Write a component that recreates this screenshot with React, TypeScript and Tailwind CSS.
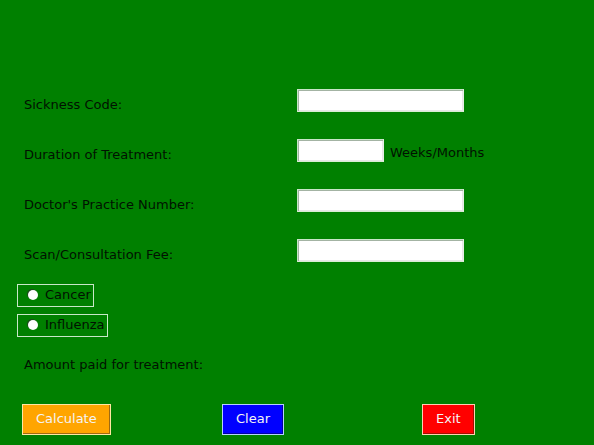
import { useState } from "react";

const inputClass =
  "h-[23px] border border-t-[#c8e6c8] border-l-[#c8e6c8] border-r-[#e4efe4] border-b-[#d9ecd4] bg-white px-1 text-black outline-none shadow-[inset_1px_1px_0_#a3b3a3,inset_-1px_-1px_0_#e6e6e6]";

const buttonClass =
  "h-[31px] justify-self-start border px-[13px] pb-[2px] leading-4 text-[#f4f4f4]";

type FieldProps = {
  id: string;
  label: string;
  value: string;
  onChange: (value: string) => void;
  width?: string;
  suffix?: string;
};

function Field({ id, label, value, onChange, width = "w-[167px]", suffix }: FieldProps) {
  return (
    <div className="grid h-[23px] grid-cols-[273px_1fr]">
      <label htmlFor={id} className="pt-2 leading-4">
        {label}
      </label>
      <div className="flex items-start gap-[6px]">
        <input
          id={id}
          type="text"
          value={value}
          onChange={(e) => onChange(e.target.value)}
          className={`${inputClass} ${width}`}
        />
        {suffix && <span className="pt-[6px] leading-4">{suffix}</span>}
      </div>
    </div>
  );
}

export default function App() {
  const [code, setCode] = useState("");
  const [duration, setDuration] = useState("");
  const [practice, setPractice] = useState("");
  const [fee, setFee] = useState("");
  const [illness, setIllness] = useState("");

  const clear = () => {
    setCode("");
    setDuration("");
    setPractice("");
    setFee("");
    setIllness("");
  };

  return (
    <form
      onSubmit={(e) => e.preventDefault()}
      className="min-h-screen bg-[#008000] pt-[89px] font-['DejaVu_Sans',sans-serif] text-[13px] text-[#001200]"
    >
      <div className="flex flex-col gap-[27px] pl-6">
        <Field id="code" label="Sickness Code:" value={code} onChange={setCode} />
        <Field
          id="duration"
          label="Duration of Treatment:"
          value={duration}
          onChange={setDuration}
          width="w-[87px]"
          suffix="Weeks/Months"
        />
        <Field id="practice" label="Doctor's Practice Number:" value={practice} onChange={setPractice} />
        <Field id="fee" label="Scan/Consultation Fee:" value={fee} onChange={setFee} />
      </div>

      <div className="mt-[22px] flex flex-col items-start gap-[7px] pl-[17px]">
        {["Cancer", "Influenza"].map((name) => (
          <label
            key={name}
            className="flex h-[23px] items-center gap-[7px] border border-[#c8e8c8] pr-[2px] pb-px pl-[10px] leading-4"
          >
            <input
              type="radio"
              name="illness"
              checked={illness === name}
              onChange={() => setIllness(name)}
              className="size-[10px] appearance-none rounded-full bg-white shadow-[-1px_-1px_0_#1c4a1c] checked:border-[3px] checked:border-white checked:bg-black"
            />
            {name}
          </label>
        ))}
      </div>

      <p className="mt-5 pl-6 leading-4">Amount paid for treatment:</p>

      <div className="mt-[31px] grid grid-cols-[200px_200px_1fr] pl-[22px]">
        <button
          type="submit"
          className={`${buttonClass} border-[#ffe7a0] bg-[#ffa500] shadow-[inset_-1px_-1px_0_#a06a10]`}
        >
          Calculate
        </button>
        <button
          type="button"
          onClick={clear}
          className={`${buttonClass} border-[#b4d0ff] bg-[#0000ff] shadow-[inset_-1px_-1px_0_#0000a0]`}
        >
          Clear
        </button>
        <button
          type="button"
          className={`${buttonClass} border-[#ffd0b0] bg-[#ff0000] shadow-[inset_-1px_-1px_0_#a01000]`}
        >
          Exit
        </button>
      </div>
    </form>
  );
}
